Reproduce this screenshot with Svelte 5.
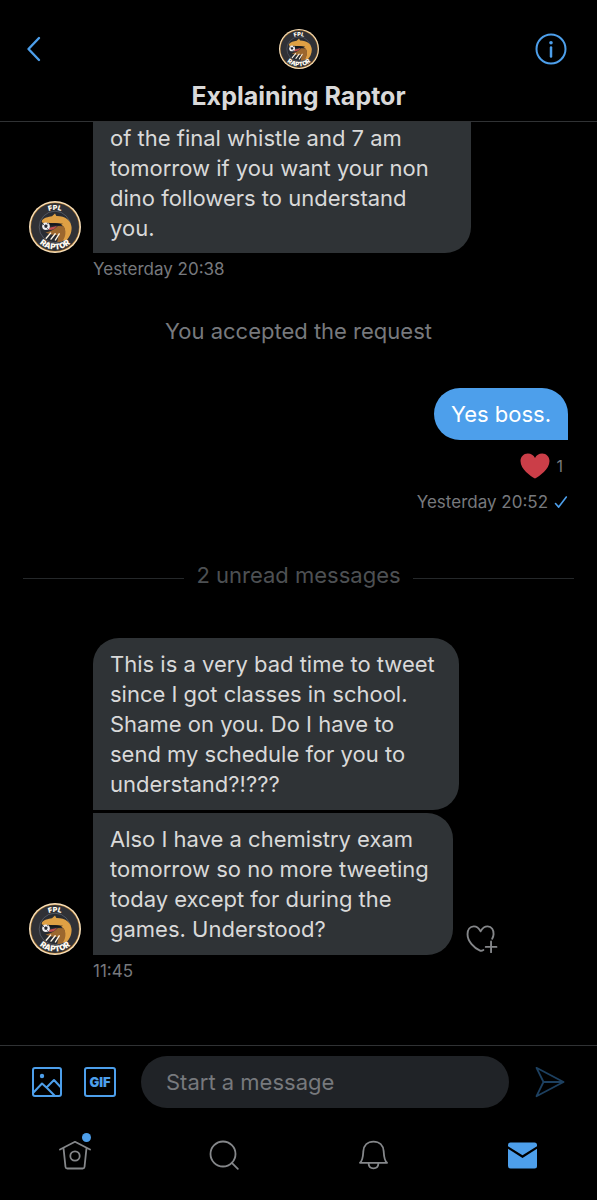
<script>
  let draft = $state('');
  const opening = 'of the final whistle and 7 am\ntomorrow if you want your non\ndino followers to understand\nyou.';
  const school = 'This is a very bad time to tweet\nsince I got classes in school.\nShame on you. Do I have to\nsend my schedule for you to\nunderstand?!???';
  const exam = 'Also I have a chemistry exam\ntomorrow so no more tweeting\ntoday except for during the\ngames. Understood?';
</script>

{#snippet crest(id)}
  <svg class="crest" viewBox="0 0 52 52" role="img" aria-label="FPL Raptor">
    <defs>
      <path id="{id}-top" d="M9 26a17 17 0 0 1 34 0" />
      <path id="{id}-bottom" d="M3.5 26a22.5 22.5 0 0 0 45 0" />
    </defs>
    <circle cx="26" cy="26" r="26" fill="#f7dfba" />
    <circle cx="26" cy="26" r="24.6" fill="#b98236" />
    <circle cx="26" cy="26" r="24" fill="#303136" />
    <circle cx="26" cy="26" r="15.8" fill="#292c33" stroke="#626774" stroke-width="0.7" />
    <path d="M13 19.5c2-2.8 6-3.4 10-4.2l3-2.8 1.4 2.4c8.5-.2 15.2 4.4 15.2 12.2 0 5-2.2 9.6-5.4 12.5l-4.6.2c3.8-4.7 4.6-10.6 1.8-14.2-2.2-2.8-5.5-3.9-10.6-3.4l-8.7-.1c-2.1 0-2.8-1.3-2.1-2.6z" fill="#dfa044" />
    <path d="M16.5 31.5c4.2-.5 8.7-3 12.4-6.6l5.8.4c2.8 4.6 2.2 10.3-1.4 15.2l-5.1.8 1.4-7.4c-3.5.2-9.4-.4-13.1-2.4z" fill="#9c672e" />
    <path d="M17 21.8l17 1-4 1.8-9-.1z" fill="#15171c" />
    <path d="M19 26.8c3.2-.1 6-1 9-2-1.5 2.8-4 4.4-8 4.3z" fill="#bf4e4d" />
    <circle cx="17" cy="25.2" r="3.8" fill="#f0eff2" />
    <path d="M16.9 23.3l1.8 1.3-.7 2.1h-2.2l-.7-2.1zM13.4 24l1.2-1.3.4 1.4zM18.2 21.9l1.5 1.2-1.4.2zM17.7 28.6l.6-1.3 1.1.5z" fill="#242731" />
    <path d="M17.2 37.3l4.4-5.2M22 38.1l4.2-5.4M26.4 39l3.8-6.2" stroke="#fff5e4" stroke-width="1.4" />
    <g fill="#fffaf0" font-family="Inter, sans-serif" font-weight="900" text-anchor="middle">
      <text font-size="7"><textPath href="#{id}-top" startOffset="50%">FPL</textPath></text>
      <text font-size="8"><textPath href="#{id}-bottom" startOffset="50%">RAPTOR</textPath></text>
    </g>
  </svg>
{/snippet}

<div class="app">
  <header>
    <button class="icon-button back" aria-label="Back">
      <svg width="16" height="26" viewBox="0 0 16 26"><path d="M13 2L2.5 13 13 24" stroke-width="2.4" /></svg>
    </button>
    <div class="profile">
      <div class="small-avatar">{@render crest('head')}</div>
      <h1>Explaining Raptor</h1>
    </div>
    <button class="icon-button info" aria-label="Conversation info">
      <svg width="32" height="32" viewBox="0 0 32 32"><circle cx="16" cy="16" r="14.5" stroke-width="2" /><circle cx="16" cy="9.8" r="1.8" fill="currentColor" stroke="none" /><path d="M16 14.5v9" stroke-width="2.5" /></svg>
    </button>
  </header>

  <main>
    <section class="received">
      <div class="avatar">{@render crest('first')}</div>
      <p class="bubble opening">{opening}</p>
      <time>Yesterday 20:38</time>
    </section>
    <p class="notice">You accepted the request</p>
    <section class="sent">
      <p class="bubble reply">Yes boss.</p>
      <div class="reaction">
        <svg width="30" height="26" viewBox="0 0 30 26" aria-label="Love"><path d="M15 25.5C10.5 23 .5 16.5.5 8 .5 3.7 3.7.5 7.8.5c3.3 0 5.8 1.8 7.2 4.4C16.4 2.3 18.9.5 22.2.5c4.1 0 7.3 3.2 7.3 7.5 0 8.5-10 15-14.5 17.5z" fill="#cb3e48" stroke="none" /></svg>
        <span>1</span>
      </div>
      <div class="status"><time>Yesterday 20:52</time><svg width="14" height="14" viewBox="0 0 14 14" aria-label="Seen"><path d="M1.5 8.5l3.2 3.6L12.3 2" stroke="#4d9feb" stroke-width="1.6" /></svg></div>
    </section>
    <div class="unread"><span>2 unread messages</span></div>
    <section class="received">
      <p class="bubble school">{school}</p>
      <div class="avatar">{@render crest('last')}</div>
      <div class="with-action">
        <p class="bubble exam">{exam}</p>
        <button class="icon-button react" aria-label="Add reaction">
          <svg width="32" height="28" viewBox="0 0 34 30"><path d="M18.5 26.7c-1.2.8-2.5 1.2-3.6.7C8.5 24.5 1.5 17.5 1.5 9.8c0-4.8 2.7-8.1 6.7-8.3 3.4-.1 5.4 2 7.3 5.3 1.9-3.3 4.3-5.4 7.6-5.3 4.2.2 6.6 3.7 6.3 8.3-.1 1.8-.6 3.5-1.5 5" stroke-width="2" /><path d="M21 23.5h11.5M26.7 17.7v11.5" stroke-width="2" /></svg>
        </button>
      </div>
      <time>11:45</time>
    </section>
  </main>

  <form class="composer" onsubmit={(e) => e.preventDefault()}>
    <button type="button" class="icon-button" aria-label="Add a photo">
      <svg width="32" height="32" viewBox="0 0 32 32"><rect x="2" y="2" width="28" height="28" rx="2" stroke-width="2" /><circle cx="11" cy="10" r="2.2" fill="currentColor" stroke="none" /><path d="M2 27l9-9.5 5 4.5 8 8M16 21l7-7 7 7.5" stroke-width="2" /></svg>
    </button>
    <button type="button" class="icon-button gif" aria-label="Add a GIF"><span>GIF</span></button>
    <input type="text" aria-label="Message" placeholder="Start a message" bind:value={draft} />
    <button class="icon-button send" aria-label="Send">
      <svg width="30" height="32" viewBox="0 0 30 32"><path d="M1.5 1.8L28.5 16 1.5 30.2 8.5 16zM8.5 16h20" stroke-width="1.8" /></svg>
    </button>
  </form>

  <nav aria-label="Main">
    <a href="#home" aria-label="Home"><svg width="32" height="30" viewBox="0 0 32 30"><path d="M1 9.5L16 1.8l15 7.7M4.5 8l2 19q.2 1.5 1.8 1.5h15.4q1.6 0 1.8-1.5l2-19" stroke-width="1.8" /><circle cx="16" cy="16" r="4.7" stroke-width="1.8" /></svg><i></i></a>
    <a href="#search" aria-label="Search"><svg width="32" height="30" viewBox="0 0 32 30"><circle cx="15" cy="14" r="12.5" stroke-width="1.8" /><path d="M23.8 22.8l6 6" stroke-width="1.8" /></svg></a>
    <a href="#notifications" aria-label="Notifications"><svg width="32" height="30" viewBox="0 0 32 30"><path d="M3 22.8c3-2.5 3-6.6 3.3-11.4C6.7 5.4 10.5 1.6 16.5 1.6s9.8 3.8 10.2 9.8c.3 4.8.3 8.9 3.3 11.4zM11.5 23c.2 3.5 2.2 5.4 5 5.4s4.8-1.9 5-5.4" stroke-width="1.8" /></svg></a>
    <a href="#messages" aria-label="Messages" aria-current="page"><svg width="32" height="30" viewBox="0 0 32 30"><path d="M2 5q0-2.5 2.5-2.5h24Q31 2.5 31 5v1.3l-14.5 9L2 6.3zM2 8.8l14.5 9.2L31 8.8V26q0 2.5-2.5 2.5h-24Q2 28.5 2 26z" fill="currentColor" stroke="none" /></svg></a>
  </nav>
</div>

<style>
  :global(body) { margin: 0; background: #000; }
  * { box-sizing: border-box; }
  .app { min-height: 100vh; display: flex; flex-direction: column; background: #000; color: #d9d9d9; font-family: Inter, sans-serif; font-size: 22px; line-height: 30px; }
  p, h1 { margin: 0; }
  svg { display: block; flex: none; fill: none; stroke: currentColor; stroke-linecap: round; stroke-linejoin: round; }
  .icon-button { padding: 0; border: 0; background: none; color: #4d9feb; display: flex; align-items: center; justify-content: center; }
  header { display: grid; grid-template-columns: 62px 1fr 62px; border-bottom: 1px solid #303234; padding: 29px 0 10px; }
  .back, .info { height: 40px; }
  .back { padding-left: 6px; }
  .info { padding-right: 30px; }
  .profile { display: flex; flex-direction: column; align-items: center; gap: 12px; }
  h1 { font-size: 25px; line-height: 30px; font-weight: 700; }
  .crest { width: 100%; height: 100%; stroke: none; }
  .small-avatar { width: 40px; height: 40px; }
  main { flex: 1; display: flex; flex-direction: column; padding-bottom: 60px; }
  .received { display: grid; grid-template-columns: 52px 1fr; column-gap: 12px; padding: 0 29px; }
  .received > .avatar { width: 52px; height: 52px; align-self: end; }
  .received > time, .received > .school { grid-column: 2; }
  time, .reaction { color: #77797d; font-size: 17px; line-height: 20px; }
  .received > time { margin-top: 6px; }
  .bubble { background: #2f3336; border-radius: 26px 26px 26px 0; padding: 11px 17px; white-space: pre-line; max-width: 100%; }
  .opening { width: 378px; border-radius: 0 0 26px 0; padding-top: 1px; padding-bottom: 10px; }
  .notice { margin: 37px 0 42px; text-align: center; color: #77797d; }
  .sent { display: flex; flex-direction: column; align-items: flex-end; padding: 0 29px; }
  .reply { background: #4d9feb; color: #fff; border-radius: 26px 26px 0 26px; }
  .reaction { display: flex; align-items: center; gap: 6px; margin: 13px 5px 0 0; font-size: 16px; }
  .status { display: flex; align-items: center; gap: 6px; margin-top: 13px; }
  .unread { display: flex; align-items: center; gap: 12px; margin: 48px 23px; color: #4d5053; }
  .unread::before, .unread::after { content: ''; flex: 1; height: 1px; margin-top: 6px; background: #25282a; }
  .school { width: 366px; margin-bottom: 3px; }
  .exam { width: 360px; border-top-left-radius: 0; }
  .with-action { display: flex; align-items: flex-end; gap: 13px; }
  .react { color: #85878a; padding-bottom: 2px; }
  .composer { display: flex; align-items: center; border-top: 1px solid #303234; padding: 10px 32px 0 31px; }
  .gif { margin: 0 25px 0 21px; }
  .gif span { width: 32px; height: 30px; border: 2px solid #4d9feb; border-radius: 3px; font: 900 13px/26px Inter, sans-serif; text-align: center; }
  input { flex: 1; min-width: 0; height: 52px; border: 0; border-radius: 26px; padding: 0 25px; background: #202327; color: #d9d9d9; font: inherit; outline: none; }
  input::placeholder { color: #77797d; opacity: 1; }
  .send { color: #1d4060; margin-left: 26px; }
  nav { display: grid; grid-template-columns: repeat(4, 1fr); height: 92px; padding-top: 2px; }
  nav a { position: relative; display: flex; align-items: center; justify-content: center; color: #85878a; }
  nav a[aria-current] { color: #4d9feb; }
  nav i { position: absolute; left: calc(50% + 7px); top: 23px; width: 9px; height: 9px; border-radius: 50%; background: #4d9feb; }
</style>
